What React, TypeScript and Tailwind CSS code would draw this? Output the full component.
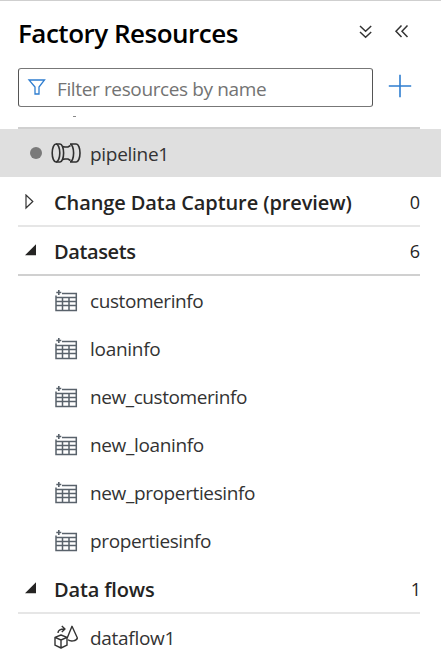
import React from "react";

function TableIcon() {
  return (
    <svg className="h-6 w-6 shrink-0" viewBox="0 0 24 24" fill="none" stroke="#59626b" strokeWidth="1.5">
      <path d="M8 4.5H22.3V21.5H2V6.5M2 8.5H22M2 12.5H22M2 16.5H22M8.5 8.5V21.5M15 8.5V21.5" />
      <path d="M2.3 3.5H7.3M4.8 1V6" strokeWidth="1.6" />
    </svg>
  );
}

function PipelineIcon() {
  return (
    <svg className="h-6 w-[30px] shrink-0" viewBox="0 0 30 24" fill="none" stroke="#303030" strokeWidth="1.6">
      <ellipse cx="5" cy="12" rx="3.8" ry="9" />
      <path d="M5 3H9A3.6 9 0 0 1 9 21H5M12.2 5.5L13.5 6H17L19.5 4.5M12.2 18.5L13.5 18H17L19.5 19.5" />
      <path d="M25.2 3A3.8 9 0 0 1 25.2 21H19.5M25.2 3H19A3.6 9 0 0 1 19 21" />
    </svg>
  );
}

function DataflowIcon() {
  return (
    <svg className="-mt-0.5 h-6 w-6 shrink-0" viewBox="0 0 24 24" fill="none" stroke="#333" strokeWidth="1.4" strokeLinejoin="round">
      <path d="M7 10L13 12.3V20.2L7 23L1 20.2V12.3ZM1 12.3L7 15L13 12.3M7 15V23" />
      <path d="M18 1.3L13.2 13C14 16.8 22.5 16.8 23.4 13Z" stroke="none" />
      <path d="M13.2 13L18 1.3L23.4 13C22.5 16.3 16.5 16.8 14 14.8" />
      <path d="M4 8C4 5 6 4 10.5 4M7.8 1L11 4L7.8 7" />
    </svg>
  );
}

function Arrow({ open }: { open: boolean }) {
  return (
    <svg className="h-4 w-4 shrink-0" viewBox="0 0 16 16">
      {open ? <path d="M0 13.3H11V2.3Z" fill="#252423" /> : <path d="M1 1V14L7.8 7.5Z" fill="none" stroke="#333" strokeWidth="1.2" />}
    </svg>
  );
}

interface SectionProps {
  label: string;
  count: number;
  open: boolean;
  tracking: string;
  line: string;
}

function Section({ label, count, open, tracking, line }: SectionProps) {
  return (
    <div className={`ml-[18px] mr-[21px] flex items-center border-b-2 text-[#252423] ${line}`}>
      <div className="-mt-[3px] ml-[7px] w-[29px]"><Arrow open={open} /></div>
      <span className={`flex-1 whitespace-nowrap text-[20px] font-semibold leading-6 ${tracking}`}>{label}</span>
      <span className={`-mt-0.5 text-[18px] font-medium leading-6 ${count === 1 ? "-mr-px" : ""}`}>{count}</span>
    </div>
  );
}

function Item({ label, tracking, children }: { label: string; tracking: string; children: React.ReactNode }) {
  return (
    <div className="flex h-12 items-center pl-[54px]">
      <div className="w-9">{children}</div>
      <span className={`-mt-px whitespace-nowrap text-[19px] leading-6 ${tracking}`}>{label}</span>
    </div>
  );
}

const datasets = [
  { name: "customerinfo", tracking: "tracking-[-0.42px]" },
  { name: "loaninfo", tracking: "tracking-[-0.29px]" },
  { name: "new_customerinfo", tracking: "tracking-[-0.42px]" },
  { name: "new_loaninfo", tracking: "tracking-[-0.35px]" },
  { name: "new_propertiesinfo", tracking: "tracking-[-0.37px]" },
  { name: "propertiesinfo", tracking: "tracking-[-0.38px]" },
];

export default function App() {
  return (
    <div className="h-[661px] w-[441px] overflow-hidden border-t border-[#cfcfcf] bg-white font-['Open_Sans','Noto_Sans',sans-serif] text-[#333]">
      <header className="flex h-[67px] items-center pl-[18px] pr-[31px]">
        <h1 className="-mt-[3px] flex-1 whitespace-nowrap text-[26px] font-semibold leading-8 tracking-[-0.5px] text-black">Factory Resources</h1>
        <div className="-mt-1.5 flex items-center gap-[20px]">
          <svg className="h-4 w-4" viewBox="0 0 16 16" fill="none" stroke="#333" strokeWidth="1.5">
            <path d="M2 2L7.6 7.2L13.2 2M2 8L7.6 13.2L13.2 8" />
          </svg>
          <svg className="h-4 w-4" viewBox="0 0 16 16" fill="none" stroke="#333" strokeWidth="1.5">
            <path d="M7.5 1.5L2 7.2L7.5 12.9M13.5 1.5L8 7.2L13.5 12.9" />
          </svg>
        </div>
      </header>
      <div className="flex items-center pl-[18px]">
        <div className="flex h-[39px] w-[355px] items-center rounded-[3px] border border-x-[#555] border-y-[#777] pl-2">
          <svg className="-mt-0.5 mr-[11px] h-5 w-5" viewBox="0 0 20 20" fill="none" stroke="#2f7ed0" strokeWidth="1.3">
            <path d="M2 3H17.5L12 10V17H8V10Z" />
          </svg>
          <span className="-ml-px whitespace-nowrap pt-[3px] text-[19px] leading-6 tracking-[-0.37px] text-[#737373]">Filter resources by name</span>
        </div>
        <svg className="-mt-1 ml-[15px] h-6 w-6" viewBox="0 0 24 24" fill="none" stroke="#2f7ed0" strokeWidth="1.6">
          <path d="M.8 12H23.2M12 .8V23.2" />
        </svg>
      </div>
      <div className="ml-[18px] mr-[21px] h-[22px] border-b-2 border-[#d0d0d0] pl-[55px] pt-[9px]">
        <div className="h-px w-[3px] bg-[#888]" />
      </div>
      <div className="flex h-12 items-center bg-[#dfdfdf] pl-[30px]">
        <span className="mr-[9px] h-3 w-3 rounded-full bg-[#7a7a7a]" />
        <PipelineIcon />
        <span className="ml-[9px] whitespace-nowrap pt-0.5 text-[19px] leading-6 tracking-[-0.29px]">pipeline1</span>
      </div>
      <Section label="Change Data Capture (preview)" count={0} open={false} tracking="tracking-[-0.1px]" line="border-[#e6e6e6] h-[50px] pt-1" />
      <Section label="Datasets" count={6} open tracking="tracking-[-0.4px]" line="border-[#d0d0d0] h-[49px] pt-0.5" />
      <div className="mt-px">
        {datasets.map((d) => (
          <Item key={d.name} label={d.name} tracking={d.tracking}><TableIcon /></Item>
        ))}
      </div>
      <Section label="Data flows" count={1} open tracking="tracking-[-0.15px]" line="border-[#e6e6e6] h-[49px] pt-0.5" />
      <Item label="dataflow1" tracking="tracking-[-0.3px]"><DataflowIcon /></Item>
    </div>
  );
}
